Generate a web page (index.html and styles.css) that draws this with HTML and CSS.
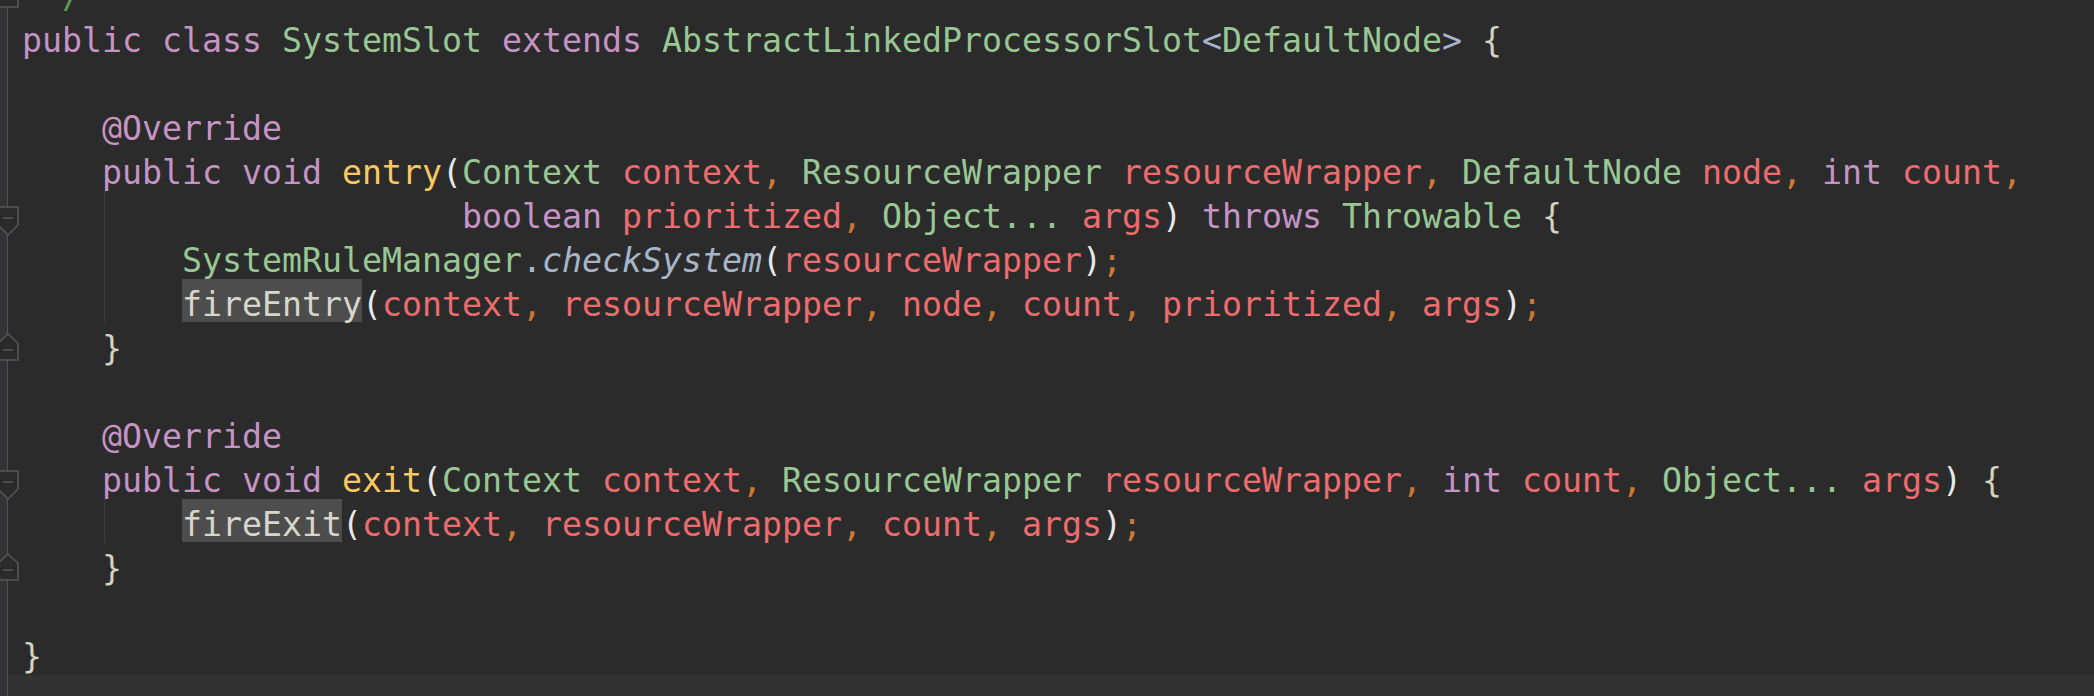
FILE: index.html
```html
<!DOCTYPE html>
<html>
<head>
<meta charset="utf-8">
<link rel="stylesheet" href="styles.css">
</head>
<body>
<div class="editor">
  <div class="gutter"></div>
  <div class="code">
    <div class="ln"><span class="cm"> */</span></div>
    <div class="ln"><span class="kw">public class </span><span class="ty">SystemSlot </span><span class="kw">extends </span><span class="ty">AbstractLinkedProcessorSlot</span><span class="ang">&lt;</span><span class="ty">DefaultNode</span><span class="ang">&gt;</span> <span class="br">{</span></div>
    <div class="ln"></div>
    <div class="ln">    <span class="kw">@Override</span></div>
    <div class="ln">    <span class="kw">public void </span><span class="fn">entry</span><span class="pa">(</span><span class="ty">Context </span><span class="va">context</span><span class="co">,</span> <span class="ty">ResourceWrapper </span><span class="va">resourceWrapper</span><span class="co">,</span> <span class="ty">DefaultNode </span><span class="va">node</span><span class="co">,</span> <span class="kw">int </span><span class="va">count</span><span class="co">,</span></div>
    <div class="ln guide">                      <span class="kw">boolean </span><span class="va">prioritized</span><span class="co">,</span> <span class="ty">Object... </span><span class="va">args</span><span class="pa">)</span> <span class="kw">throws </span><span class="ty">Throwable </span><span class="br">{</span></div>
    <div class="ln guide">        <span class="ty">SystemRuleManager</span><span class="dot">.</span><span class="it">checkSystem</span><span class="pa">(</span><span class="va">resourceWrapper</span><span class="pa">)</span><span class="co">;</span></div>
    <div class="ln guide">        <span class="hl">fireEntry</span><span class="pa">(</span><span class="va">context</span><span class="co">,</span> <span class="va">resourceWrapper</span><span class="co">,</span> <span class="va">node</span><span class="co">,</span> <span class="va">count</span><span class="co">,</span> <span class="va">prioritized</span><span class="co">,</span> <span class="va">args</span><span class="pa">)</span><span class="co">;</span></div>
    <div class="ln">    <span class="br">}</span></div>
    <div class="ln"></div>
    <div class="ln">    <span class="kw">@Override</span></div>
    <div class="ln">    <span class="kw">public void </span><span class="fn">exit</span><span class="pa">(</span><span class="ty">Context </span><span class="va">context</span><span class="co">,</span> <span class="ty">ResourceWrapper </span><span class="va">resourceWrapper</span><span class="co">,</span> <span class="kw">int </span><span class="va">count</span><span class="co">,</span> <span class="ty">Object... </span><span class="va">args</span><span class="pa">)</span> <span class="br">{</span></div>
    <div class="ln guide">        <span class="hl">fireExit</span><span class="pa">(</span><span class="va">context</span><span class="co">,</span> <span class="va">resourceWrapper</span><span class="co">,</span> <span class="va">count</span><span class="co">,</span> <span class="va">args</span><span class="pa">)</span><span class="co">;</span></div>
    <div class="ln">    <span class="br">}</span></div>
    <div class="ln"></div>
    <div class="ln"><span class="br">}</span></div>
    <div class="ln cur"></div>
  </div>
  <svg class="folds" width="24" height="696" viewBox="0 0 24 696">
    <g fill="#2b2b2b" stroke="#575757" stroke-width="1.5">
      <path d="M8 -19 L18 -10 V7 H-2 V-10 Z"/>
      <path d="M-2 207 H18 V225 L8 235 L-2 225 Z"/>
      <path d="M8 334 L18 343 V360 H-2 V343 Z"/>
      <path d="M-2 471 H18 V489 L8 499 L-2 489 Z"/>
      <path d="M8 554 L18 563 V580 H-2 V563 Z"/>
    </g>
    <g stroke="#575757" stroke-width="1.5">
      <path d="M3 218 H13"/>
      <path d="M3 350 H13"/>
      <path d="M3 482 H13"/>
      <path d="M3 570 H13"/>
    </g>
  </svg>
</div>
</body>
</html>
```
FILE: styles.css
```css
html, body {
  margin: 0;
  padding: 0;
  background: #2b2b2b;
  height: 696px;
  overflow: hidden;
}

.editor {
  display: flex;
  height: 696px;
  overflow: hidden;
  position: relative;
  background: #2b2b2b;
}

.gutter {
  flex: none;
  width: 7px;
  background: #313335;
  border-right: 1px solid #525252;
}

.code {
  flex: 1;
  padding-left: 14px;
  margin-top: -29px;
  font-family: "DejaVu Sans Mono", "Liberation Mono", monospace;
  font-size: 33.22px;
  color: #a9b7c6;
}

.ln {
  height: 44px;
  line-height: 51px;
  white-space: pre;
  margin-left: -14px;
  padding-left: 14px;
}

.ln.guide {
  background: linear-gradient(#3a3a3a, #3a3a3a) no-repeat 96px 0 / 1px 100%;
}

.ln.cur {
  background: #323232;
}

.folds {
  position: absolute;
  left: 0;
  top: 0;
}

.cm { color: #629755; }
.kw { color: #c594c5; }
.ty { color: #99c794; }
.fn { color: #fac863; }
.va { color: #ee6b6e; }
.co { color: #cc7832; }
.pa { color: #e8e8e8; }
.br { color: #d2d2c2; }
.ang { color: #a9b4d0; }
.dot { color: #a9b7c6; }
.it { color: #a7b5ca; font-style: italic; }

.hl {
  display: inline-block;
  height: 43px;
  background: #4d4d4d;
  color: #d6d6cc;
}
```
